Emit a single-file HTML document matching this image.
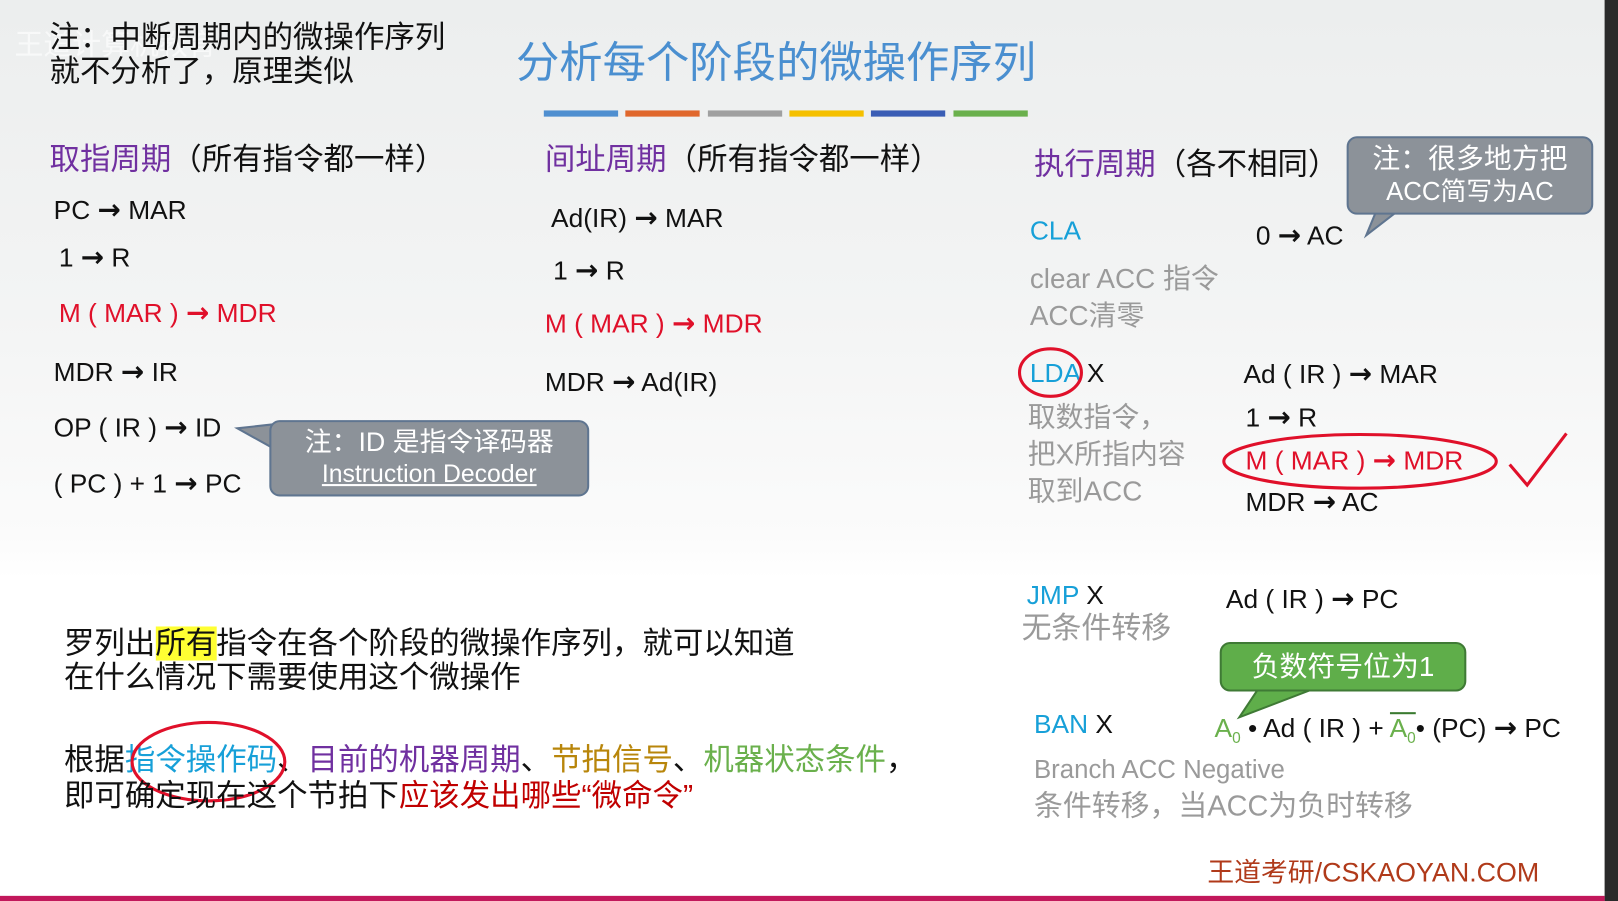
<!DOCTYPE html>
<html><head><meta charset="utf-8"><style>
html,body{margin:0;padding:0;width:1618px;height:901px;overflow:hidden;background:#fff}
#s{position:absolute;left:0;top:0;width:1568px;height:873px;transform:scale(1.0319,1.0321);transform-origin:0 0;
background:linear-gradient(#eceeee 0px,#f3f4f4 300px,#fbfbfb 520px,#fff 560px);font-family:"Liberation Sans","Noto Sans CJK SC",sans-serif;color:#111}
.t{position:absolute;white-space:nowrap;line-height:1}
.z{font-size:29.5px}
.m{font-size:25.5px;margin-top:-1px}
.q{font-size:27px}
.p{color:#7030a0}.r{color:#e0102a}.c{color:#17a0d8}.g{color:#9a9a9a}
.a{font-family:"DejaVu Sans",sans-serif;font-weight:bold;font-size:27px}
.bar{position:absolute;top:107px;height:6px;width:72px}
.box{position:absolute;background:#8c9299;border:2px solid #5f7590;border-radius:10px;color:#fff;text-align:center}
</style></head><body><div id="s">
<div style="position:absolute;right:0;top:0;width:13px;height:873px;background:#2a2a2a"></div>
<div style="position:absolute;left:0;top:868px;width:1555px;height:5px;background:#c2185b"></div>
<div class="t" style="left:14px;top:30px;font-size:28px;color:rgba(255,255,255,.6)">王道计算机教育</div>
<div class="t z" style="left:48px;top:22px">注：中断周期内的微操作序列</div>
<div class="t z" style="left:48px;top:55px">就不分析了，原理类似</div>
<div class="t" style="left:500px;top:40px;font-size:42px;color:#4a8fd0">分析每个阶段的微操作序列</div>
<div class="bar" style="left:527px;background:#4f8fd0"></div>
<div class="bar" style="left:606px;background:#e0672c"></div>
<div class="bar" style="left:686px;background:#a0a0a0"></div>
<div class="bar" style="left:765px;background:#f5c000"></div>
<div class="bar" style="left:844px;background:#3a5db5"></div>
<div class="bar" style="left:924px;background:#6ab04c"></div>

<div class="t z" style="left:48px;top:140px"><span class="p">取指周期</span>（所有指令都一样）</div>
<div class="t m" style="left:52px;top:191px">PC <span class="a">→</span> MAR</div>
<div class="t m" style="left:57px;top:237px">1 <span class="a">→</span> R</div>
<div class="t m r" style="left:57px;top:291px">M ( MAR ) <span class="a">→</span> MDR</div>
<div class="t m" style="left:52px;top:348px">MDR <span class="a">→</span> IR</div>
<div class="t m" style="left:52px;top:402px">OP ( IR ) <span class="a">→</span> ID</div>
<div class="t m" style="left:52px;top:456px">( PC ) + 1 <span class="a">→</span> PC</div>
<svg style="position:absolute;left:226px;top:405px" width="50" height="40"><polygon points="4,10 40,6 40,30" fill="#8c9299" stroke="#5f7590" stroke-width="2"/></svg>
<div class="box" style="left:261px;top:407px;width:306px;height:70px"><div style="font-size:26px;line-height:30px;margin-top:4px">注：ID 是指令译码器</div><div style="font-size:24px;line-height:28px;margin-top:3px;text-decoration:underline">Instruction Decoder</div></div>

<div class="t z" style="left:528px;top:140px"><span class="p">间址周期</span>（所有指令都一样）</div>
<div class="t m" style="left:534px;top:199px">Ad(IR) <span class="a">→</span> MAR</div>
<div class="t m" style="left:536px;top:250px">1 <span class="a">→</span> R</div>
<div class="t m r" style="left:528px;top:301px">M ( MAR ) <span class="a">→</span> MDR</div>
<div class="t m" style="left:528px;top:358px">MDR <span class="a">→</span> Ad(IR)</div>

<div class="t z" style="left:1002px;top:145px"><span class="p">执行周期</span>（各不相同）</div>
<svg style="position:absolute;left:1318px;top:190px" width="60" height="45"><polygon points="6,38 20,4 50,4" fill="#8c9299" stroke="#5f7590" stroke-width="2"/></svg>
<div class="box" style="left:1305px;top:132px;width:235px;height:72px"><div style="font-size:27px;line-height:30px;margin-top:5px">注：很多地方把</div><div style="font-size:25px;line-height:28px;margin-top:3px">ACC简写为AC</div></div>
<div class="t m c" style="left:998px;top:213px">CLA</div>
<div class="t m" style="left:1217px;top:216px">0 <span class="a">→</span> AC</div>
<div class="t q g" style="left:998px;top:257px">clear ACC 指令</div>
<div class="t q g" style="left:998px;top:293px">ACC清零</div>
<div class="t m" style="left:998px;top:351px"><span class="c">LDA</span> X</div>
<svg style="position:absolute;left:984px;top:334px" width="70" height="54"><ellipse cx="34" cy="27" rx="30" ry="23" fill="none" stroke="#e0102a" stroke-width="3"/></svg>
<div class="t m" style="left:1205px;top:350px">Ad ( IR ) <span class="a">→</span> MAR</div>
<div class="t q g" style="left:996px;top:391px">取数指令，</div>
<div class="t q g" style="left:996px;top:427px">把X所指内容</div>
<div class="t q g" style="left:996px;top:463px">取到ACC</div>
<div class="t m" style="left:1207px;top:392px">1 <span class="a">→</span> R</div>
<div class="t m r" style="left:1207px;top:434px">M ( MAR ) <span class="a">→</span> MDR</div>
<svg style="position:absolute;left:1180px;top:412px" width="350" height="70"><ellipse cx="138" cy="35" rx="132" ry="26" fill="none" stroke="#e0102a" stroke-width="3"/><path d="M283 38 L300 58 L338 8" fill="none" stroke="#e0102a" stroke-width="3"/></svg>
<div class="t m" style="left:1207px;top:474px">MDR <span class="a">→</span> AC</div>

<div class="t m" style="left:995px;top:566px"><span class="c">JMP</span> X</div>
<div class="t q" style="left:990px;top:595px;font-size:29px;color:#9a9a9a">无条件转移</div>
<div class="t m" style="left:1188px;top:568px">Ad ( IR ) <span class="a">→</span> PC</div>
<svg style="position:absolute;left:1195px;top:655px" width="120" height="45"><polygon points="6,40 30,4 100,4" fill="#5fae4a" stroke="#3f7a35" stroke-width="2"/></svg>
<div class="box" style="left:1182px;top:622px;width:235px;height:44px;background:#5fae4a;border-color:#3f7a35;font-size:27px;line-height:44px">负数符号位为1</div>
<div class="t m" style="left:1002px;top:691px"><span class="c">BAN</span> X</div>
<div class="t m" style="left:1177px;top:693px"><span style="color:#6ab04c">A<sub style="font-size:15px">0</sub></span> • Ad ( IR ) + <span style="color:#6ab04c;border-top:2px solid #3a7a30">A<sub style="font-size:15px">0</sub></span>• (PC) <span class="a">→</span> PC</div>
<div class="t m g" style="left:1002px;top:735px;font-size:25px">Branch ACC Negative</div>
<div class="t q g" style="left:1002px;top:767px;font-size:28px">条件转移，当ACC为负时转移</div>

<div class="t z" style="left:62px;top:609px">罗列出<span style="background:#ffff33">所有</span>指令在各个阶段的微操作序列，就可以知道</div>
<div class="t z" style="left:62px;top:642px">在什么情况下需要使用这个微操作</div>
<div class="t z" style="left:62px;top:722px">根据<span class="c">指令操作码</span>、<span class="p">目前的机器周期</span>、<span style="color:#b8860b">节拍信号</span>、<span style="color:#6ab04c">机器状态条件</span>，</div>
<svg style="position:absolute;left:120px;top:692px" width="165" height="90"><ellipse cx="82" cy="46" rx="74" ry="38" fill="none" stroke="#e0102a" stroke-width="3"/></svg>
<div class="t z" style="left:62px;top:757px">即可确定现在这个节拍下<span style="color:#c00000">应该发出哪些“微命令”</span></div>
<div class="t" style="left:1170px;top:832px;font-size:26px;color:#b03a1a">王道考研/CSKAOYAN.COM</div>
</div></body></html>
